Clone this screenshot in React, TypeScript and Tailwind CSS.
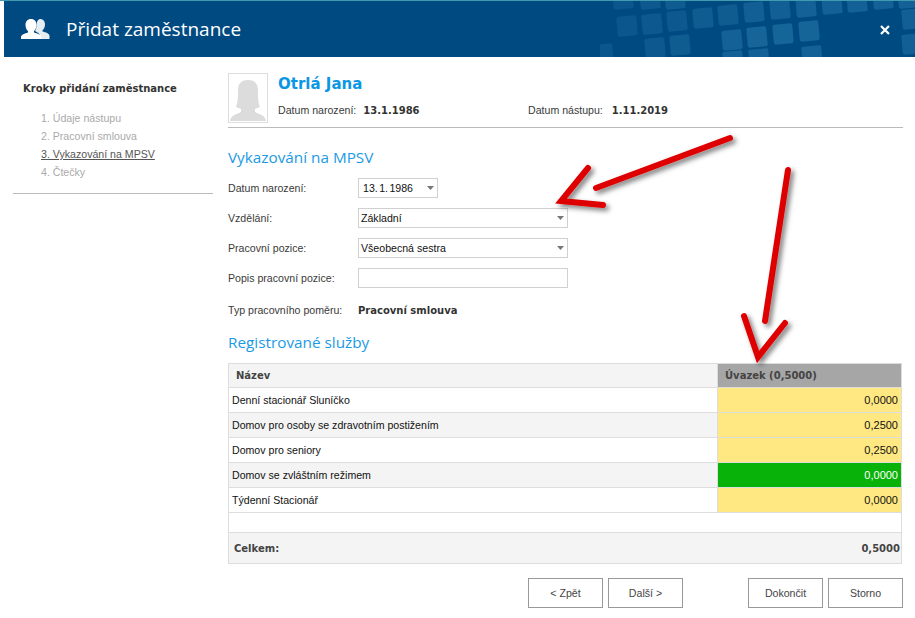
const squares = [
  [27, 25, 0.5], [52, 23, 0.6], [77, 20, 0.6], [103, 17, 0.7], [128, 14, 0.7], [154, 11, 0.8], [180, 8, 0.8], [206, 6, 0.9], [232, 3, 0.9], [257, 1, 0.9], [283, -2, 0.9], [308, -3, 0.9],
  [23, -2, 0.5], [50, -2, 0.6], [75, -2, 0.7],
  [55, 47, 0.6], [80, 44, 0.7], [132, 39, 0.9], [157, 36, 1], [183, 33, 1], [209, 30, 1],
  [133, 60, 0.9], [159, 58, 0.9], [212, 55, 0.9], [3, 53, 0.5], [312, 43, 0.8], [312, 18, 0.8],
  [-28, 8, 0.25], [-25, 32, 0.3], [-51, 35, 0.2], [-23, 55, 0.3], [-43, 57, 0.15],
];

const rows = [
  { name: "Denní stacionář Sluníčko", value: "0,0000", alt: false, active: false },
  { name: "Domov pro osoby se zdravotním postižením", value: "0,2500", alt: true, active: false },
  { name: "Domov pro seniory", value: "0,2500", alt: false, active: false },
  { name: "Domov se zvláštním režimem", value: "0,0000", alt: true, active: true },
  { name: "Týdenní Stacionář", value: "0,0000", alt: false, active: false },
];

const Caret = () => (
  <svg width="7" height="4" viewBox="0 0 7 4" className="shrink-0">
    <path d="M0 0h7L3.500 4z" fill="#777" />
  </svg>
);

const FormRow = ({ label, children, className }: { label: string; children?: any; className: string }) => (
  <div className={`flex items-center ${className}`}>
    <div className="w-[130px] shrink-0 pt-[2px]">{label}</div>
    {children}
  </div>
);

const Select = ({ text }: { text: string }) => (
  <div className="w-[210px] h-5 border border-[#d0d0d0] flex items-center justify-between pl-[2px] pr-[3px] text-[#111]">
    <span className="pt-[2px]">{text}</span>
    <Caret />
  </div>
);

const Button = ({ text }: { text: string }) => (
  <button className="w-[75px] h-[30px] border border-[#999] bg-white text-[#444] pt-[2px]">{text}</button>
);

export default function App() {
  return (
    <div className="relative w-[915px] h-[618px] overflow-hidden bg-white text-[10.600px] text-[#3a3a3a] font-['Liberation_Sans',sans-serif]">
      <div className="h-px bg-[#3f9bad]" />
      <header className="relative ml-1 h-14 bg-[#004a82] flex items-center text-white overflow-hidden">
        <svg width="315" height="56" viewBox="0 0 315 56" className="absolute right-0 top-0">
          {squares.map(([x, y, o], i) => (
            <rect key={i} x={x - 10} y={y - 10} width="20" height="20" rx="2" fill="#2a7fb0" opacity={o * 0.5} transform={`rotate(-5 ${x} ${y})`} />
          ))}
        </svg>
        <svg width="30" height="20" viewBox="0 0 30 20" className="ml-[17px] relative">
          <path d="M19 0c3 0 5 2.200 5 5.500 0 2.500-1 4.500-2.500 5.700v1.300c3 .8 7 2 7 4.500V20H19v-3c0-2-2-3.500-5-5 1-1.500 1.500-3.500 1.500-5.500 0-2.500 1-6.500 3.500-6.500z" fill="#fff" opacity="0.9" />
          <path d="M10 0c3.500 0 5.500 2.500 5.500 6 0 2.500-1 5-2.500 6v1.500c3.500 1 7.500 2 7.500 4.500v2H0v-2c0-2.500 4-3.500 7-4.500V12C5.500 11 4.500 8.500 4.500 6 4.500 2.500 6.500 0 10 0z" fill="#fff" />
        </svg>
        <h1 className="relative ml-[15px] text-[19px] leading-none font-['Open_Sans',sans-serif]">Přidat zaměstnance</h1>
        <svg width="10" height="10" viewBox="0 0 10 10" className="absolute right-[25px] top-[24px]">
          <path d="M1 1l8 8M9 1l-8 8" stroke="#fff" strokeWidth="2.200" />
        </svg>
      </header>

      <div className="flex">
        <aside className="w-[200px] ml-[13px] mr-[15px] shrink-0">
          <div className="pl-[10px] pt-[25px] font-bold font-['DejaVu_Sans',sans-serif] text-[10px] text-[#333] leading-[14px]">Kroky přidání zaměstnance</div>
          <ol className="pl-7 mt-[13px] pb-[12px] border-b border-[#bbb] text-[#aaa] leading-[18px]">
            <li>1. Údaje nástupu</li>
            <li>2. Pracovní smlouva</li>
            <li className="text-[#555]"><span className="underline">3. Vykazování na MPSV</span></li>
            <li>4. Čtečky</li>
          </ol>
        </aside>

        <main className="w-[675px] pt-4">
          <div className="flex h-[55px] border-b border-[#bbb]">
            <div className="w-10 h-[50px] border border-[#ddd] overflow-hidden shrink-0">
              <svg width="38" height="48" viewBox="0 0 38 48">
                <path d="M19 6c6 0 10 3 10 10 0 6 0 13 2 17l-5 2v3c4 2 10 3 11 9H1c1-6 7-7 11-9v-3l-5-2c2-4 2-11 2-17C9 9 13 6 19 6z" fill="#dcdcdc" />
              </svg>
            </div>
            <div className="ml-[10px] pt-[1px]">
              <div className="font-bold font-['DejaVu_Sans',sans-serif] text-[15px] leading-5 text-[#0c97e4]">Otrlá Jana</div>
              <div className="flex mt-[9px] leading-[14px]">
                <div className="w-[250px]">Datum narození: <b className="ml-1 font-['DejaVu_Sans',sans-serif] text-[10px] text-[#333]">13.1.1986</b></div>
                <div>Datum nástupu: <b className="ml-[6px] font-['DejaVu_Sans',sans-serif] text-[10px] text-[#333]">1.11.2019</b></div>
              </div>
            </div>
          </div>

          <h2 className="mt-[19px] text-[15.300px] leading-5 text-[#1b9ae4] font-['Open_Sans',sans-serif]">Vykazování na MPSV</h2>
          <FormRow label="Datum narození:" className="mt-[11px]">
            <div className="w-20 h-5 border border-[#d0d0d0] flex items-center justify-between pl-1 pr-[3px] text-[#111]">
              <span className="pt-[2px] [word-spacing:-1.500px]">13. 1. 1986</span>
              <Caret />
            </div>
          </FormRow>
          <FormRow label="Vzdělání:" className="mt-[10px]"><Select text="Základní" /></FormRow>
          <FormRow label="Pracovní pozice:" className="mt-[10px]"><Select text="Všeobecná sestra" /></FormRow>
          <FormRow label="Popis pracovní pozice:" className="mt-[10px]">
            <div className="w-[210px] h-5 border border-[#d0d0d0]" />
          </FormRow>
          <FormRow label="Typ pracovního poměru:" className="mt-[13px]">
            <b className="pt-[2px] font-['DejaVu_Sans',sans-serif] text-[10px] text-[#333]">Pracovní smlouva</b>
          </FormRow>

          <h2 className="mt-[13px] text-[15.300px] leading-5 text-[#1b9ae4] font-['Open_Sans',sans-serif]">Registrované služby</h2>

          <div className="mt-[11px] w-[674px] border border-[#ddd] text-[#111]">
            <div className="flex h-6 bg-[#f4f4f4] border-b border-[#ddd] font-bold font-['DejaVu_Sans',sans-serif] text-[10px] text-[#444]">
              <div className="flex-1 flex items-center pl-[7px]">Název</div>
              <div className="w-[184px] flex items-center pl-[7px] bg-[#a6a6a6] border-l border-[#ddd]">Úvazek (0,5000)</div>
            </div>
            {rows.map(row => (
              <div key={row.name} className={`flex h-[25px] border-b border-[#ddd] ${row.alt ? "bg-[#f4f4f4]" : "bg-white"}`}>
                <div className="flex-1 flex items-center pl-[3px] pt-[2px]">{row.name}</div>
                <div className={`w-[184px] flex items-center justify-end pr-[3px] pt-[1px] text-[11px] border-l border-[#ddd] ${row.active ? "bg-[#08b208] text-white" : "bg-[#ffe882]"}`}>{row.value}</div>
              </div>
            ))}
            <div className="h-5 bg-white border-b border-[#ddd]" />
            <div className="flex items-center justify-between h-[30px] bg-[#f4f4f4] pl-[5px] pr-[1px] pt-[2px] font-bold font-['DejaVu_Sans',sans-serif] text-[10px] text-[#444]">
              <span>Celkem:</span>
              <span>0,5000</span>
            </div>
          </div>

          <div className="flex mt-[14px] w-[675px]">
            <div className="ml-[300px] flex gap-[5px]">
              <Button text="< Zpět" />
              <Button text="Další >" />
            </div>
            <div className="ml-[65px] flex gap-[5px]">
              <Button text="Dokončit" />
              <Button text="Storno" />
            </div>
          </div>
        </main>
      </div>

      <svg width="915" height="618" viewBox="0 0 915 618" className="absolute left-0 top-0 pointer-events-none">
        <defs>
          <filter id="arrow-shadow" x="-20%" y="-20%" width="150%" height="150%">
            <feDropShadow dx="3" dy="3" stdDeviation="2.500" floodColor="#000" floodOpacity="0.5" />
          </filter>
        </defs>
        <g filter="url(#arrow-shadow)" fill="none" stroke="#de0000" strokeWidth="6" strokeLinecap="round" strokeLinejoin="miter">
          <path d="M730 138L596 188" />
          <path d="M588 168L561 201L603 205" />
          <path d="M788 170L765 321" />
          <path d="M744 316L758 357L785 323" />
        </g>
      </svg>
    </div>
  );
}
